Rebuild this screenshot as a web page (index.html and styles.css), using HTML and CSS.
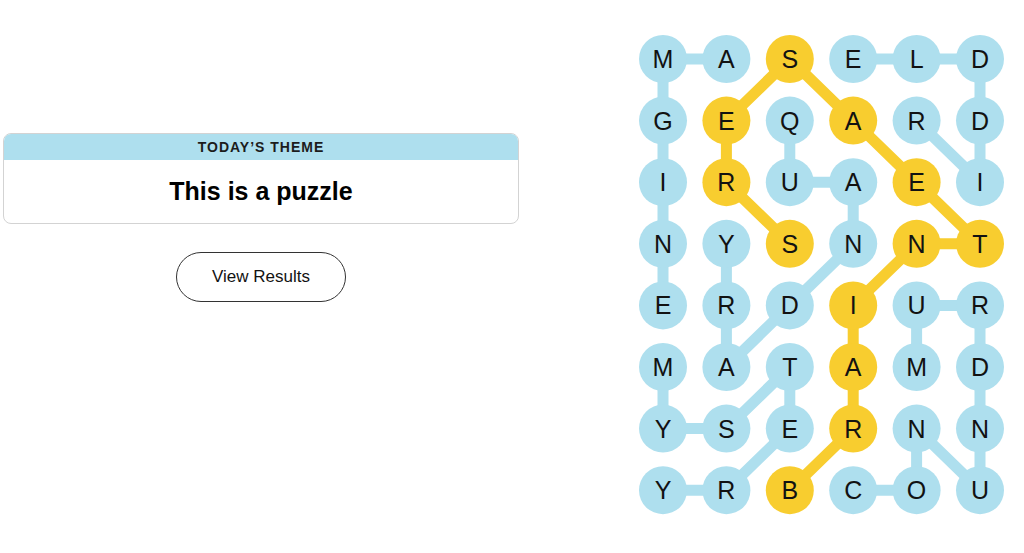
FILE: index.html
```html
<!DOCTYPE html>
<html lang="en">
<head>
    <meta charset="UTF-8">
    <meta name="viewport" content="width=device-width, initial-scale=1.0">
    <title>Strands</title>
    <link rel="stylesheet" href="styles.css">
</head>
<body>
    <div class="game">
        <div class="panel">
            <div class="theme">
                <div class="theme-label">TODAY’S THEME</div>
                <div class="theme-title">This is a puzzle</div>
            </div>
            <button class="results-btn">View Results</button>
        </div>
        <svg class="board" id="board" width="365" height="480" viewBox="0 0 365 480"></svg>
    </div>

    <script>
        const rows = ["MASELD", "GEQARD", "IRUAEI", "NYSNNT", "ERDIUR", "MATAMD", "YSERNN", "YRBCOU"];
        const words = [
            { cells: [[4,0],[3,0],[2,0],[1,0],[0,0],[0,1]] },
            { cells: [[1,4],[2,5],[1,5],[0,5],[0,4],[0,3]] },
            { cells: [[1,2],[2,2],[2,3],[3,3],[4,2],[5,1],[4,1],[3,1]] },
            { cells: [[5,0],[6,0],[6,1],[5,2],[6,2],[7,1],[7,0]] },
            { cells: [[7,3],[7,4],[6,4],[7,5],[6,5],[5,5],[4,5],[4,4],[5,4]] },
            { cells: [[7,2],[6,3],[5,3],[4,3],[3,4],[3,5],[2,4],[1,3],[0,2],[1,1],[2,1],[3,2]], spangram: true }
        ];

        const board = document.getElementById("board");
        const ns = "http://www.w3.org/2000/svg";
        const cx = c => 24 + c * 63.4;
        const cy = r => 24 + r * 61.6;
        const owner = {};

        function el(name, attrs) {
            const node = document.createElementNS(ns, name);
            for (const k in attrs) node.setAttribute(k, attrs[k]);
            board.appendChild(node);
            return node;
        }

        words.forEach(word => {
            const cls = word.spangram ? "link spangram" : "link";
            word.cells.forEach((cell, i) => {
                owner[cell.join(",")] = word.spangram ? "spangram" : "found";
                const next = word.cells[i + 1];
                if (!next) return;
                el("line", { class: cls, x1: cx(cell[1]), y1: cy(cell[0]), x2: cx(next[1]), y2: cy(next[0]) });
            });
        });

        rows.forEach((row, r) => {
            row.split("").forEach((letter, c) => {
                el("circle", { class: "cell " + owner[r + "," + c], cx: cx(c), cy: cy(r), r: 24 });
                const t = el("text", { class: "letter", x: cx(c), y: cy(r), dy: "0.36em" });
                t.textContent = letter;
            });
        });
    </script>
</body>
</html>
```

FILE: styles.css
```css
/* General Styles */
body {
    margin: 0;
    font-family: "Liberation Sans", Arial, sans-serif;
    background: #fff;
    color: #121212;
}

.game {
    display: flex;
    align-items: flex-start;
}

.panel {
    width: 516px;
    margin: 133px 0 0 3px;
}

/* Theme card */
.theme {
    border: 1px solid #d3d3d3;
    border-radius: 8px;
    overflow: hidden;
}

.theme-label {
    background: #aedfee;
    height: 26px;
    line-height: 26px;
    text-align: center;
    font-size: 14px;
    font-weight: bold;
    letter-spacing: 1px;
    color: #1c1c1c;
}

.theme-title {
    height: 63px;
    line-height: 63px;
    text-align: center;
    font-size: 25px;
    font-weight: bold;
    color: #000;
}

.results-btn {
    display: block;
    width: 170px;
    height: 50px;
    margin: 28px auto 0;
    padding: 0;
    background: #fff;
    border: 1px solid #333;
    border-radius: 25px;
    font-family: "Liberation Sans", Arial, sans-serif;
    font-size: 17px;
    color: #121212;
    cursor: pointer;
}

/* Board */
.board {
    margin: 35px 0 0 120px;
    flex-shrink: 0;
}

.link {
    stroke: #aedfee;
    stroke-width: 11;
    stroke-linecap: round;
}

.link.spangram {
    stroke: #f8cd2f;
}

.cell.found {
    fill: #aedfee;
}

.cell.spangram {
    fill: #f8cd2f;
}

.letter {
    font-family: "Liberation Sans", Arial, sans-serif;
    font-size: 25px;
    fill: #121212;
    text-anchor: middle;
}
```
